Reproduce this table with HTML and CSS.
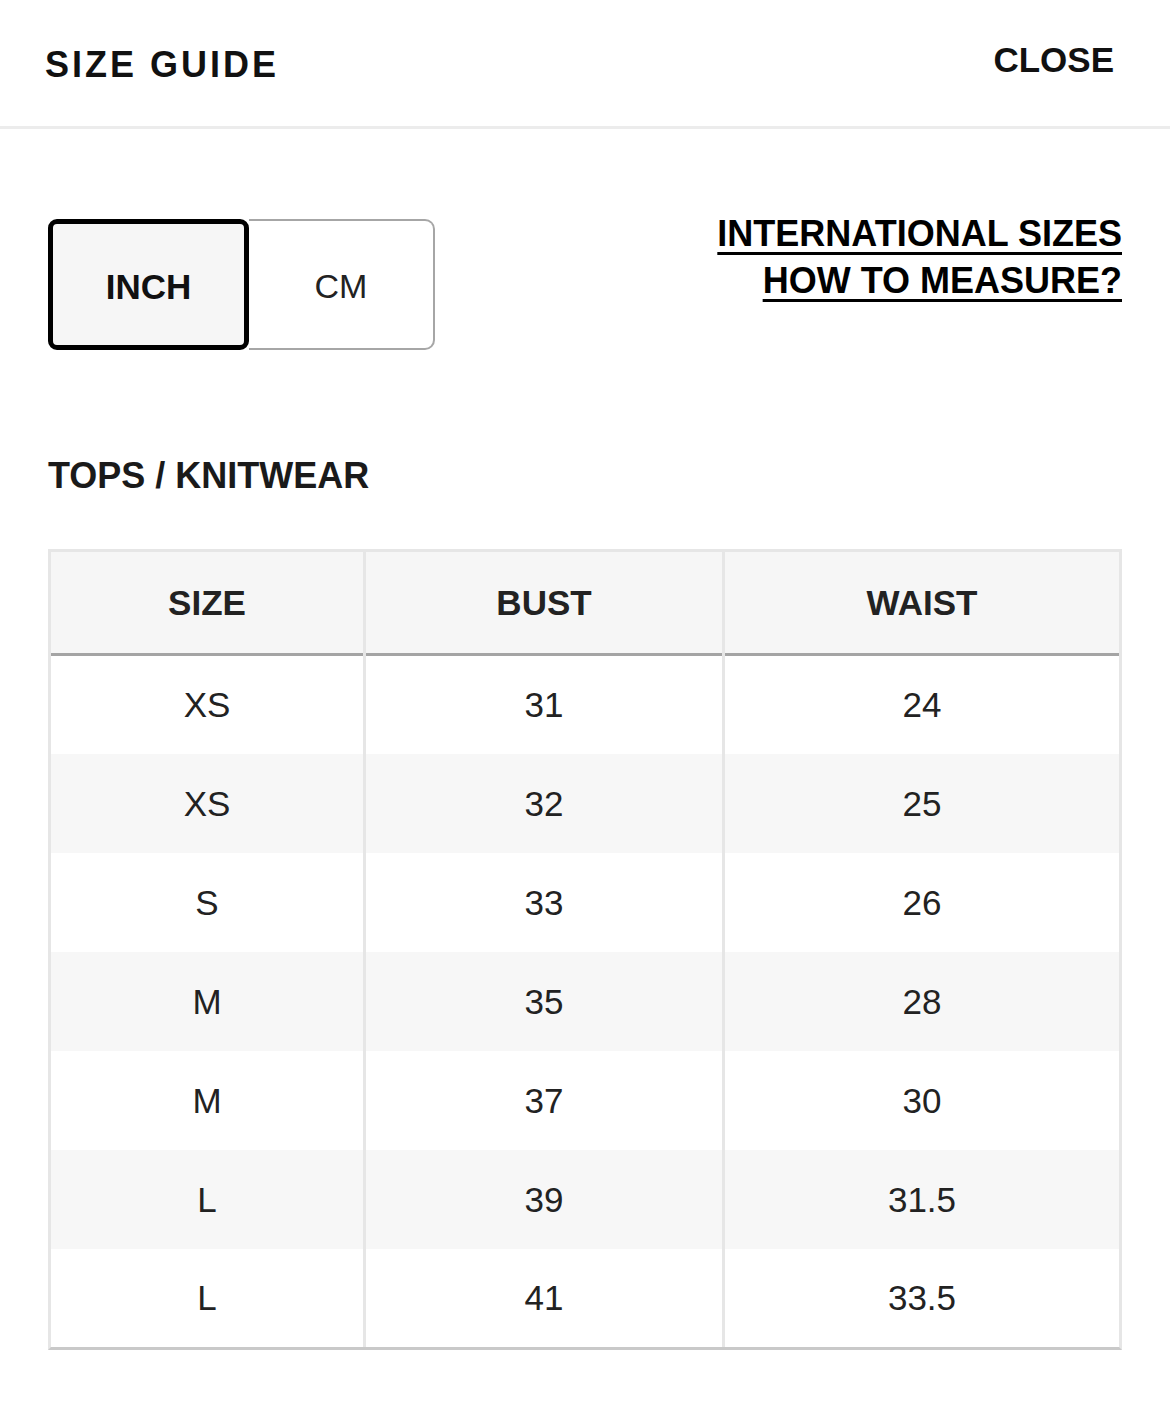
FILE: index.html
```html
<!DOCTYPE html>
<html lang="en">
<head>
<meta charset="utf-8">
<title>Size Guide</title>
<link rel="stylesheet" href="styles.css">
</head>
<body>
<header class="topbar">
  <h1 class="title">SIZE GUIDE</h1>
  <a class="close" href="#">CLOSE</a>
</header>
<main class="content">
  <div class="controls">
    <div class="toggle">
      <button class="unit unit-active">INCH</button>
      <button class="unit unit-off">CM</button>
    </div>
    <div class="links">
      <a class="link" href="#">INTERNATIONAL SIZES</a>
      <a class="link" href="#">HOW TO MEASURE?</a>
    </div>
  </div>
  <h2 class="section-title">TOPS / KNITWEAR</h2>
  <div class="table">
    <div class="cell head">SIZE</div><div class="cell head">BUST</div><div class="cell head">WAIST</div>
    <div class="cell">XS</div><div class="cell">31</div><div class="cell">24</div>
    <div class="cell alt">XS</div><div class="cell alt">32</div><div class="cell alt">25</div>
    <div class="cell">S</div><div class="cell">33</div><div class="cell">26</div>
    <div class="cell alt">M</div><div class="cell alt">35</div><div class="cell alt">28</div>
    <div class="cell">M</div><div class="cell">37</div><div class="cell">30</div>
    <div class="cell alt">L</div><div class="cell alt">39</div><div class="cell alt">31.5</div>
    <div class="cell">L</div><div class="cell">41</div><div class="cell">33.5</div>
  </div>
</main>
</body>
</html>
```

FILE: styles.css
```css
html, body {
  margin: 0;
  padding: 0;
  background: #ffffff;
}

body {
  font-family: "Liberation Sans", Arial, Helvetica, sans-serif;
  color: #222222;
}

.topbar {
  display: flex;
  justify-content: space-between;
  align-items: flex-start;
  height: 126px;
  padding: 0 56px 0 45px;
  border-bottom: 3px solid #ececec;
}

.title {
  margin: 47px 0 0 0;
  font-size: 36px;
  line-height: 36px;
  font-weight: 700;
  letter-spacing: 3px;
  color: #111111;
}

.close {
  margin-top: 42px;
  font-size: 35px;
  line-height: 35px;
  font-weight: 700;
  color: #111111;
  text-decoration: none;
}

.content {
  padding: 77px 48px 40px 48px;
}

.controls {
  display: flex;
  justify-content: space-between;
  align-items: flex-start;
}

.toggle {
  display: flex;
  margin-top: 13px;
}

.unit {
  box-sizing: border-box;
  height: 131px;
  display: flex;
  align-items: center;
  justify-content: center;
  font-family: inherit;
  font-size: 35px;
  padding: 4px 0 0 0;
  cursor: pointer;
}

.unit-active {
  width: 201px;
  border: 5px solid #000000;
  border-radius: 9px;
  background: #f6f6f6;
  font-weight: 700;
  color: #111111;
}

.unit-off {
  width: 186px;
  border: 2px solid #a6a6a6;
  border-left: none;
  border-radius: 0 10px 10px 0;
  background: #ffffff;
  color: #222222;
  font-size: 34px;
}

.links {
  display: flex;
  flex-direction: column;
  align-items: flex-end;
  margin-top: 4px;
  font-size: 36px;
  line-height: 47px;
  font-weight: 700;
}

.link {
  color: #000000;
  text-decoration: underline;
  text-decoration-thickness: 3px;
  text-underline-offset: 6px;
}

.section-title {
  margin: 108px 0 55px 0;
  font-size: 36px;
  line-height: 36px;
  font-weight: 700;
  color: #1a1a1a;
}

.table {
  display: grid;
  grid-template-columns: 312px 356px 394px;
  grid-template-rows: 104px 98px repeat(5, 99px) 98px;
  column-gap: 3px;
  width: max-content;
  background: #e6e6e6;
  border: 3px solid #e6e6e6;
  border-bottom-color: #c9c9c9;
}

.cell {
  display: flex;
  align-items: center;
  justify-content: center;
  background: #ffffff;
  font-size: 35px;
  color: #222222;
}

.cell.alt {
  background: #f7f7f7;
}

.cell.head {
  box-sizing: border-box;
  background: #f6f6f6;
  border-bottom: 3px solid #a4a4a4;
  font-weight: 700;
}
```
